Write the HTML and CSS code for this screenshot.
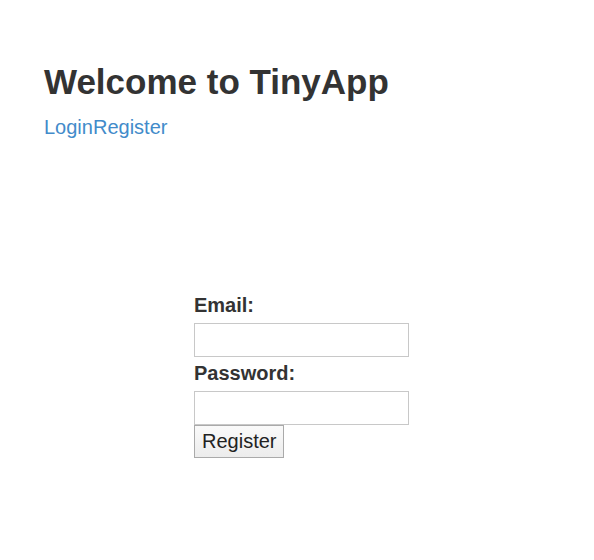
FILE: index.html
```html
<!DOCTYPE html>
<html>
<head>
<meta charset="utf-8">
<link rel="stylesheet" href="styles.css">
</head>
<body>
<header class="header">
  <h1 class="title">Welcome to TinyApp</h1>
  <nav class="nav"><a href="#" class="nav-link">Login</a><a href="#" class="nav-link">Register</a></nav>
</header>
<main class="main">
  <form class="form">
    <label class="label" for="email">Email:</label>
    <input class="input" id="email" type="text">
    <label class="label" for="password">Password:</label>
    <input class="input" id="password" type="password">
    <button class="button" type="button">Register</button>
  </form>
</main>
</body>
</html>
```
FILE: styles.css
```css
html, body { margin: 0; padding: 0; background: #fff; }
body {
  font-family: "Liberation Sans", Arial, sans-serif;
  color: #333;
  font-size: 20px;
}
.header { padding: 63px 44px 0; }
.title {
  margin: 0;
  font-size: 35px;
  font-weight: bold;
  line-height: 1.1;
  color: #333;
}
.nav { margin-top: 11px; line-height: 1.4; }
.nav-link { color: #428bca; text-decoration: none; }
.main { padding: 150px 0 0 194px; }
.form { display: flex; flex-direction: column; align-items: flex-start; }
.label { font-weight: bold; line-height: 1.4; margin-bottom: 4px; }
.input {
  box-sizing: border-box;
  width: 215px;
  height: 34px;
  border: 1px solid #c8c8c8;
  margin: 0 0 2px;
  padding: 0;
  font-size: 14px;
}
.button {
  box-sizing: border-box;
  height: 33px;
  margin: -2px 0 0;
  padding: 0 7px;
  font-family: "Liberation Sans", Arial, sans-serif;
  font-size: 20px;
  color: #222;
  background: linear-gradient(#fafafa, #ececec);
  border: 1px solid #aaa;
  border-radius: 0;
}
```
